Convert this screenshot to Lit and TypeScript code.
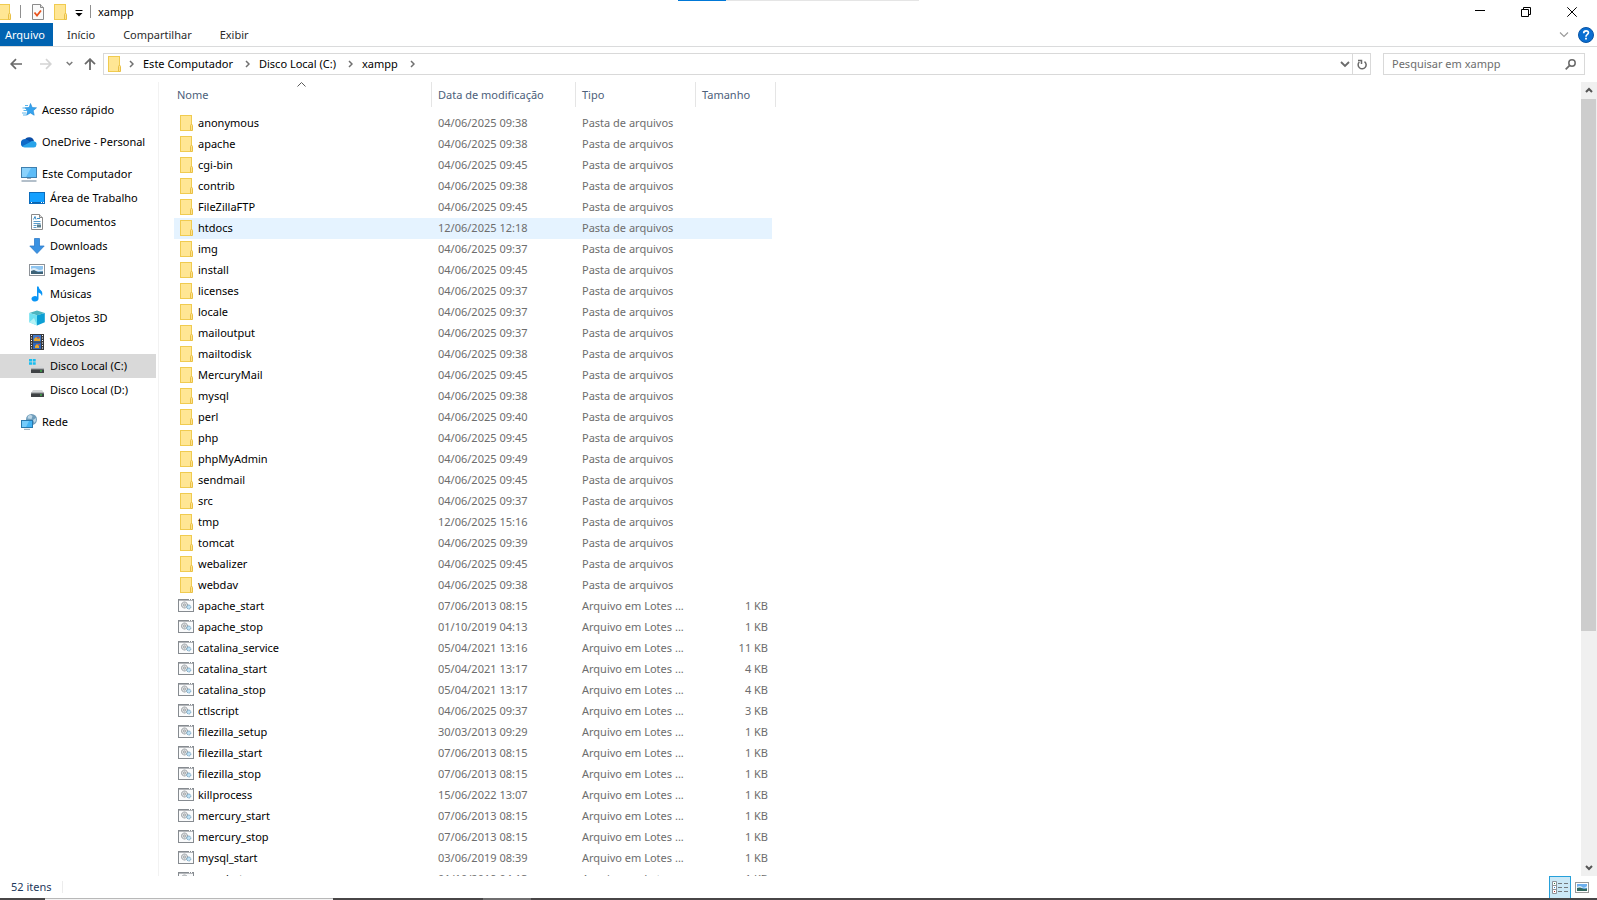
import { LitElement, html, css, svg, nothing, TemplateResult } from "lit";
import { customElement } from "lit/decorators.js";
import { classMap } from "lit/directives/class-map.js";

type Entry = { name: string; date: string; size?: string };

const folder = (name: string, date: string): Entry => ({ name, date });
const batch = (name: string, date: string, size = "1 KB"): Entry => ({ name, date, size });

const ENTRIES: Entry[] = [
  folder("anonymous", "04/06/2025 09:38"),
  folder("apache", "04/06/2025 09:38"),
  folder("cgi-bin", "04/06/2025 09:45"),
  folder("contrib", "04/06/2025 09:38"),
  folder("FileZillaFTP", "04/06/2025 09:45"),
  folder("htdocs", "12/06/2025 12:18"),
  folder("img", "04/06/2025 09:37"),
  folder("install", "04/06/2025 09:45"),
  folder("licenses", "04/06/2025 09:37"),
  folder("locale", "04/06/2025 09:37"),
  folder("mailoutput", "04/06/2025 09:37"),
  folder("mailtodisk", "04/06/2025 09:38"),
  folder("MercuryMail", "04/06/2025 09:45"),
  folder("mysql", "04/06/2025 09:38"),
  folder("perl", "04/06/2025 09:40"),
  folder("php", "04/06/2025 09:45"),
  folder("phpMyAdmin", "04/06/2025 09:49"),
  folder("sendmail", "04/06/2025 09:45"),
  folder("src", "04/06/2025 09:37"),
  folder("tmp", "12/06/2025 15:16"),
  folder("tomcat", "04/06/2025 09:39"),
  folder("webalizer", "04/06/2025 09:45"),
  folder("webdav", "04/06/2025 09:38"),
  batch("apache_start", "07/06/2013 08:15"),
  batch("apache_stop", "01/10/2019 04:13"),
  batch("catalina_service", "05/04/2021 13:16", "11 KB"),
  batch("catalina_start", "05/04/2021 13:17", "4 KB"),
  batch("catalina_stop", "05/04/2021 13:17", "4 KB"),
  batch("ctlscript", "04/06/2025 09:37", "3 KB"),
  batch("filezilla_setup", "30/03/2013 09:29"),
  batch("filezilla_start", "07/06/2013 08:15"),
  batch("filezilla_stop", "07/06/2013 08:15"),
  batch("killprocess", "15/06/2022 13:07"),
  batch("mercury_start", "07/06/2013 08:15"),
  batch("mercury_stop", "07/06/2013 08:15"),
  batch("mysql_start", "03/06/2019 08:39"),
  batch("mysql_stop", "01/10/2019 04:13"),
];

const icon = (body: TemplateResult | unknown, w = 16, h = 16) =>
  html`<svg class="icon" width=${w} height=${h} viewBox="0 0 ${w} ${h}" aria-hidden="true">${body}</svg>`;

const folderIcon = icon(svg`
  <rect x="2.5" y="0.5" width="11" height="15" fill="#ffe694" stroke="#f0cb50"/>
  <path d="M12.500 15.500v-5q0-1 1-1t1 1v5z" fill="#ffe28a" stroke="#e9c046"/>`);

const batchIcon = icon(svg`
  <rect x="0.5" y="1.500" width="15" height="12" fill="#fafbfc" stroke="#868b90"/>
  <path d="M0 1.800h16" stroke="#868b90" stroke-width="1.600"/>
  <path d="M11 1.500h1M13 1.500h1" stroke="#fff"/>
  <circle cx="6.500" cy="7" r="3" fill="#e0e3e5" stroke="#82878c" stroke-dasharray="1.500 .6"/>
  <circle cx="6.500" cy="7" r="1" fill="#fff" stroke="#85898d" stroke-width=".8"/>
  <circle cx="10.800" cy="9" r="2" fill="#bfe1f5" stroke="#6f9fbd" stroke-dasharray="1.300 .5"/>`);

const chevronRight = icon(svg`<path d="M1 1l3 3-3 3" fill="none" stroke="#707070" stroke-width="1.500"/>`, 5, 8);

const drive = svg`
  <path d="M4 8h9l2 3H2z" fill="#d4d6d8"/>
  <rect x="2" y="11" width="13" height="4" rx=".5" fill="#3f4245"/>
  <path d="M2 11h13" stroke="#8c8f92"/>
  <rect x="11" y="12.500" width="2" height="1" fill="#3ce04c"/>`;

const ICONS = {
  quick: icon(svg`
    <path d="M9.500 1.500l1.700 4 4.300.3-3.300 2.900 1 4.500-3.900-2.300-3.700 2.300 1-4.500L4 5.800l4.100-.3z" fill="#35a3ee" stroke="#1f86d3" stroke-width=".6"/>
    <path d="M4 3.500h3M1.500 6h4M2.500 8.500h3.500M1 11h4M2 13h3" stroke="#4aaeea" stroke-width=".9"/>`),
  onedrive: icon(svg`
    <path d="M3.500 6.500a5 5 0 0 1 9.500 0.500l-4 4z" fill="#0a4da6"/>
    <path d="M0 10a4 4 0 0 1 6.500-4L12 9.500 2 13A3 3 0 0 1 0 10z" fill="#0f6ac8"/>
    <path d="M8.500 8.500q2-2 4.500-1.300a3.200 3.200 0 0 1-.2 6.300H4q-1.800 0-2.800-1.200z" fill="#28a3ea"/>`),
  pc: icon(svg`
    <rect x="0.500" y="1.500" width="15" height="10" fill="#5dbcf7" stroke="#3f7fae"/>
    <path d="M1 2h9L5 11H1z" fill="#8ad2fc"/>
    <path d="M6 12.500h4" stroke="#9ab" />
    <path d="M0.500 15h15" stroke="#93a4b3" stroke-width="1.400"/>`),
  desktop: icon(svg`
    <rect x="0.500" y="2.500" width="15" height="11" fill="#14a0ff" stroke="#0b6cbc"/>
    <path d="M1 12.500h14" stroke="#0b63ad"/>
    <path d="M2 12.500h1M12 12.500h1M14 12.500h1" stroke="#fff"/>`),
  documents: icon(svg`
    <path d="M2.500.5h8l3 3v12h-11z" fill="#fff" stroke="#8a8a8a"/>
    <path d="M10.500.5v3h3" fill="#ddd" stroke="#8a8a8a"/>
    <path d="M4.500 5.500l1.500-3 1 3M8 4.500h3" fill="none" stroke="#3c8dc5"/>
    <path d="M4.500 7.500h7M4.500 9.500h7M4.500 11.500h3M4.500 13.500h3" stroke="#5a9cc9"/>
    <rect x="8" y="10.500" width="4" height="3" fill="#5a7f8f"/>`),
  downloads: icon(svg`
    <path d="M5.500.5h5v7.500h4.700L8 15.500.8 8h4.700z" fill="#3a92e2" stroke="#2e7ccc" stroke-width=".8"/>`),
  images: icon(svg`
    <rect x="0.500" y="2.500" width="15" height="11" fill="#fff" stroke="#8d9298"/>
    <rect x="2" y="4" width="12" height="8" fill="#8fc5f0"/>
    <path d="M2 7q3-2 6 0t6 0v2H2z" fill="#dcecf8"/>
    <path d="M2 9l3-1 4 2 5-.5V12H2z" fill="#3d6277"/>`),
  music: icon(svg`
    <path d="M8 .5h1.500q.5 2.500 2.500 4t1 5.500q-.8-2.700-3.500-3.500v6a3.500 2.800 0 1 1-1.500-2z" fill="#0a95f5"/>`),
  objects: icon(svg`
    <path d="M8 .5l7.800 2.600L8 5.300.2 3.100z" fill="#4db5bf"/>
    <path d="M.2 3.100L8 5.300v10.200L.2 12.300z" fill="#6fe0f0"/>
    <path d="M15.800 3.100L8 5.300v10.200l7.800-3.200z" fill="#0c9fd4"/>
    <path d="M.2 12.300L5 8l3 7.500z" fill="#b4f2f6"/>`),
  videos: icon(svg`
    <rect x="1" y="0" width="14" height="16" fill="#3a3a3c"/>
    <rect x="4" y="1" width="8" height="6.500" fill="#3f78c9"/>
    <rect x="4" y="8.500" width="8" height="6.500" fill="#2f66b9"/>
    <path d="M5 5l2-2 2 2 2-1v3H5zM6 12l2-2 2 2v2H6z" fill="#e7a72c"/>
    <path d="M8 3h2v1H8zM9 10h2v1H9z" fill="#d44a3a"/>
    <path d="M2.500 1v15M13.500 1v15" stroke="#fff" stroke-dasharray="1 1.500"/>`),
  system: icon(svg`
    <path d="M0 1h3v2.500H0zM3.700 1h3v2.500h-3zM0 4.300h3v2.500H0zM3.700 4.300h3v2.500h-3z" fill="#19bdf0"/>${drive}`),
  drive: icon(drive),
  network: icon(svg`
    <circle cx="10.500" cy="5.500" r="5.500" fill="#6f9dbb"/>
    <path d="M7 2q2.500-2 4.500 0l-1 3-4-.5zM12 6l3-2q.5 2.500-1.500 5z" fill="#bcd6e6"/>
    <rect x="0.500" y="6.500" width="11" height="7" fill="#43b4f5" stroke="#2878ad"/>
    <path d="M1 7h7l-3 6H1z" fill="#74cbfb"/>
    <path d="M3 15.300h6" stroke="#8fa3b3"/>`),
};

const PLACES: { label: string; icon: keyof typeof ICONS; nested?: boolean; current?: boolean; gap?: boolean }[] = [
  { label: "Acesso rápido", icon: "quick" },
  { label: "OneDrive - Personal", icon: "onedrive", gap: true },
  { label: "Este Computador", icon: "pc", gap: true },
  { label: "Área de Trabalho", icon: "desktop", nested: true },
  { label: "Documentos", icon: "documents", nested: true },
  { label: "Downloads", icon: "downloads", nested: true },
  { label: "Imagens", icon: "images", nested: true },
  { label: "Músicas", icon: "music", nested: true },
  { label: "Objetos 3D", icon: "objects", nested: true },
  { label: "Vídeos", icon: "videos", nested: true },
  { label: "Disco Local (C:)", icon: "system", nested: true, current: true },
  { label: "Disco Local (D:)", icon: "drive", nested: true },
  { label: "Rede", icon: "network", gap: true },
];

const base = css`
  :host { font: 11px/16px "Noto Sans", "Open Sans", sans-serif; color: #000; }
  * { box-sizing: border-box; }
  button { font: inherit; color: inherit; background: none; border: 0; padding: 0; margin: 0;
    display: flex; align-items: center; justify-content: center; white-space: nowrap; }
  a { color: inherit; text-decoration: none; }
  ul { list-style: none; margin: 0; padding: 0; }
  .icon { display: block; flex: none; }
`;

@customElement("window-chrome")
class WindowChrome extends LitElement {
  static styles = [base, css`
    :host { display: block; flex: none; }
    .title { position: relative; display: flex; height: 23px; align-items: center; }
    .quick { display: flex; align-items: center; gap: 8px; }
    .quick .first { width: 12px; overflow: hidden; justify-content: flex-end; }
    .quick .props { padding-left: 3px; }
    .rule { width: 1px; height: 13px; background: #8f8f8f; }
    h1 { font: inherit; margin: 0 auto 0 7px; }
    .controls { display: flex; padding-right: 2px; }
    .controls button { width: 46px; height: 21px; }
    .progress { position: absolute; top: 0; left: 50%; width: 241px; height: 1px; margin-left: -121px; background: #e5e5e5; }
    .value { width: 20%; height: 1px; background: #0078d7; }
    .tabs { display: flex; height: 24px; border-bottom: 1px solid #dadbdc; align-items: stretch; color: #2b2b2b; }
    .tabs .tab { padding: 0 14px; }
    .tabs .file { width: 53px; padding: 0 5px; justify-content: flex-start; background: #0063b1; color: #fff; }
    .help { display: flex; margin-left: auto; gap: 9px; padding-right: 3px; }
    .nav { display: flex; height: 35px; align-items: center; padding: 0 12px 1px 10px; }
    .history { display: flex; align-items: center; width: 93px; }
    .history button:nth-child(2) { margin-left: 18px; }
    .history button:nth-child(3) { margin-left: 14px; }
    .history button:nth-child(4) { margin-left: 11px; }
    .address { display: flex; flex: 1; height: 22px; border: 1px solid #d9d9d9; align-items: center; }
    .address ol { display: flex; list-style: none; margin: 0; padding: 0; flex: 1; align-items: center; }
    .address li { display: flex; align-items: center; }
    .address .root { margin: 0 7px 0 2px; }
    .address a { padding: 0 12px 0 9px; }
    .address .drop { width: 14px; }
    .address .refresh { width: 18px; height: 20px; border-left: 1px solid #d9d9d9; }
    .search { display: flex; width: 202px; height: 22px; margin-left: 12px; border: 1px solid #d9d9d9; align-items: center; padding: 0 8px; }
    .search input { flex: 1; min-width: 0; border: 0; padding: 0; font: inherit; background: none; outline: 0; }
    .search input::placeholder { color: #6d6d6d; opacity: 1; }
  `];

  render() {
    return html`
      <header class="title">
        <div class="progress"><div class="value"></div></div>
        <div class="quick">
          <button class="first" aria-label="Janela">${folderIcon}</button>
          <span class="rule"></span>
          <button class="props" aria-label="Propriedades">${icon(svg`
            <path d="M.5.5h8l3 3v12H.5z" fill="#fafafa" stroke="#8b8b8b"/><path d="M8.500.5v3h3" fill="#ddd" stroke="#8b8b8b"/>
            <path d="M2.500 8.500l2.500 3 4-5" fill="none" stroke="#e8541e" stroke-width="1.800"/>`, 12)}</button>
          <button aria-label="Nova pasta">${folderIcon}</button>
        </div>
        <button class="menu" aria-label="Personalizar barra">${icon(svg`
          <path d="M7.500 5.500h7" stroke="#000"/><path d="M7.500 8h7L11 11.500z"/>`, 22, 14)}</button>
        <span class="rule"></span>
        <h1>xampp</h1>
        <div class="controls">
          <button aria-label="Minimizar">${icon(svg`<path d="M0 4.500h10" stroke="#000"/>`, 10, 11)}</button>
          <button aria-label="Restaurar">${icon(svg`<path d="M.5 2.500h7v7h-7zM2.500 2.500v-2h7v7h-2" fill="none" stroke="#000"/>`, 10, 10)}</button>
          <button aria-label="Fechar">${icon(svg`<path d="M.3.3l9.400 9.400M9.700.3L.3 9.700" fill="none" stroke="#000"/>`, 10, 10)}</button>
        </div>
      </header>
      <nav class="tabs">
        <button class="file">Arquivo</button>
        <button class="tab">Início</button>
        <button class="tab">Compartilhar</button>
        <button class="tab">Exibir</button>
        <div class="help">
          <button aria-label="Expandir faixa">${icon(svg`<path d="M1 1.500l4 4 4-4" fill="none" stroke="#999" stroke-width="1.100"/>`, 10, 7)}</button>
          <button aria-label="Ajuda"><svg class="icon" width="16" height="16" viewBox="0 0 16 16" aria-hidden="true">
            <circle cx="8" cy="8" r="7.500" fill="#0a6ed1" stroke="#0a55a5"/>
            <path d="M5.700 6.200q0-2.400 2.400-2.400t2.300 2q0 1-1.200 1.800T8 9.700" fill="none" stroke="#fff" stroke-width="1.700"/>
            <path d="M7.100 10.800h1.800v1.700H7.100z" fill="#fff"/></svg></button>
        </div>
      </nav>
      <div class="nav">
        <div class="history">
          <button aria-label="Voltar">${icon(svg`<path d="M12 6H1.500M6 1.200L1.200 6 6 10.800" fill="none" stroke="#6a6a6a" stroke-width="1.700"/>`, 12, 12)}</button>
          <button aria-label="Avançar">${icon(svg`<path d="M0 6h10.500M6 1.200L10.800 6 6 10.800" fill="none" stroke="#d4d4d4" stroke-width="1.700"/>`, 12, 12)}</button>
          <button aria-label="Locais recentes">${icon(svg`<path d="M.7 1l2.800 2.800L6.300 1" fill="none" stroke="#7a7a7a" stroke-width="1.500"/>`, 7, 6)}</button>
          <button aria-label="Acima">${icon(svg`<path d="M6 12V1.500M1 6.200l5-5 5 5" fill="none" stroke="#6a6a6a" stroke-width="1.800"/>`, 12, 12)}</button>
        </div>
        <div class="address">
          <ol>
            <li><span class="root">${folderIcon}</span>${chevronRight}</li>
            ${["Este Computador", "Disco Local (C:)", "xampp"].map((part) => html`<li><a href="#">${part}</a>${chevronRight}</li>`)}
          </ol>
          <button class="drop" aria-label="Locais anteriores">${icon(svg`<path d="M1 1l4 4 4-4" fill="none" stroke="#6a6a6a" stroke-width="1.800"/>`, 10, 7)}</button>
          <button class="refresh" aria-label="Atualizar">${icon(svg`<path d="M7.500 2.600A4 4 0 1 1 2.300 3M1 1.500h3.500V5" fill="none" stroke="#6a6a6a" stroke-width="1.500"/>`, 10, 11)}</button>
        </div>
        <label class="search">
          <input type="text" aria-label="Pesquisar em xampp" placeholder="Pesquisar em xampp">
          ${icon(svg`<circle cx="7" cy="4" r="3.200" fill="none" stroke="#6a6a6a" stroke-width="1.500"/><path d="M4.700 6.300L.7 10.300" stroke="#6a6a6a" stroke-width="1.800"/>`, 11, 11)}
        </label>
      </div>`;
  }
}

@customElement("places-pane")
class PlacesPane extends LitElement {
  static styles = [base, css`
    :host { display: block; flex: none; width: 159px; padding: 16px 2px 0 0; border-right: 1px solid #f2f2f2; }
    a { display: flex; height: 24px; align-items: center; gap: 5px; padding-left: 21px; white-space: nowrap; }
    .nested { padding-left: 29px; }
    .gap { margin-top: 8px; }
    .current { background: #d9d9d9; }
  `];

  render() {
    return html`<ul>${PLACES.map((p) => html`
      <li class=${classMap({ gap: !!p.gap })}>
        <a href="#" class=${classMap({ nested: !!p.nested, current: !!p.current })}>${ICONS[p.icon]}<span>${p.label}</span></a>
      </li>`)}</ul>`;
  }
}

@customElement("file-list")
class FileList extends LitElement {
  static styles = [base, css`
    :host { display: flex; flex: 1; min-width: 0; overflow: hidden; }
    .view { flex: 1; min-width: 0; overflow: hidden; padding-left: 15px; }
    table { table-layout: fixed; width: 602px; border-collapse: separate; border-spacing: 0; }
    .name { width: 258px; }
    .date { width: 144px; }
    .type { width: 120px; }
    .size { width: 80px; }
    th { position: relative; height: 25px; padding: 0 0 0 6px; font-weight: 400; text-align: left; color: #4c607a; border-right: 1px solid #e5e5e5; }
    th:first-child { padding-left: 3px; }
    .sort { position: absolute; top: 0; left: 123px; }
    .spacer td { height: 6px; }
    td { height: 21px; padding: 0 0 0 6px; color: #6d6d6d; white-space: nowrap; line-height: 20px; vertical-align: top; }
    td:first-child { padding-left: 4px; color: #000; }
    td:last-child { padding-right: 4px; text-align: right; border-right: 4px solid transparent; background-clip: padding-box; }
    .file { display: flex; align-items: center; gap: 4px; }
    .hover td { background-color: #e5f3ff; }
    .scroll { display: flex; flex-direction: column; width: 16px; background: #f0f0f0; }
    .scroll button { height: 17px; }
    .track { flex: 1; }
    .thumb { height: 70%; background: #cdcdcd; margin-right: 1px; }
  `];

  render() {
    return html`
      <div class="view">
        <table>
          <thead>
            <tr>
              <th class="name">Nome<span class="sort">${icon(svg`<path d="M.5 4.500l4-4 4 4" fill="none" stroke="#5a5a5a"/>`, 9, 5)}</span></th>
              <th class="date">Data de modificação</th>
              <th class="type">Tipo</th>
              <th class="size">Tamanho</th>
            </tr>
          </thead>
          <tbody>
            <tr class="spacer" aria-hidden="true"><td colspan="4"></td></tr>
            ${ENTRIES.map((e) => html`
              <tr class=${classMap({ hover: e.name === "htdocs" })}>
                <td><span class="file">${e.size ? batchIcon : folderIcon}${e.name}</span></td>
                <td>${e.date}</td>
                <td>${e.size ? "Arquivo em Lotes ..." : "Pasta de arquivos"}</td>
                <td>${e.size ?? nothing}</td>
              </tr>`)}
          </tbody>
        </table>
      </div>
      <div class="scroll">
        <button aria-label="Rolar para cima">${icon(svg`<path d="M1 5l3-3 3 3" fill="none" stroke="#555" stroke-width="2"/>`, 8, 7)}</button>
        <div class="track"><div class="thumb"></div></div>
        <button aria-label="Rolar para baixo">${icon(svg`<path d="M1 2l3 3 3-3" fill="none" stroke="#555" stroke-width="2"/>`, 8, 7)}</button>
      </div>`;
  }
}

@customElement("app-root")
class AppRoot extends LitElement {
  static styles = [base, css`
    :host { display: flex; flex-direction: column; height: 100vh; background: #fff; overflow: hidden; }
    main { display: flex; flex: 1; min-height: 0; }
    .status { display: flex; flex: none; height: 22px; align-items: center; padding: 0 4px 0 11px; color: #1e395b; }
    .count { padding-right: 10px; border-right: 1px solid #ececec; line-height: 12px; }
    .views { display: flex; margin-left: auto; align-items: center; }
    .views button { width: 22px; height: 22px; }
    .views .active { border: 1px solid #26a0da; border-bottom: 0; background: #cbe8f6; }
    .taskbar { display: flex; flex: none; height: 2px; background: #484647; }
    .box { width: 288px; margin-left: 45px; background: #f3f3f3; border-top: 1px solid #b8b8b8; }
    .task { width: 48px; margin-left: 150px; background: #6f6e6f; }
  `];

  render() {
    return html`
      <window-chrome></window-chrome>
      <main>
        <places-pane></places-pane>
        <file-list></file-list>
      </main>
      <footer class="status">
        <span class="count">52 itens</span>
        <div class="views">
          <button class="active" aria-label="Detalhes">${icon(svg`
            <path d="M.5.5h4v12h-4zM.5 4.500h4M.5 8.500h4" fill="#fff" stroke="#8d9298"/>
            <path d="M2 2.500h1" stroke="#2d7f4a"/><path d="M2 6.500h1" stroke="#2a7fc5"/><path d="M2 10.500h1" stroke="#b03030"/>
            <path d="M6 2.500h4M12 2.500h4M6 6.500h4M12 6.500h4M6 10.500h4M12 10.500h4" stroke="#75797d"/>`, 16, 13)}</button>
          <button aria-label="Miniaturas">${icon(svg`
            <rect x=".5" y=".5" width="13" height="10" fill="#fff" stroke="#9a9a9a"/>
            <rect x="2" y="2" width="10" height="7" fill="#6eb0ee"/><path d="M2 5q3-2 5 0t5-1v2H2z" fill="#d6e8f6"/>
            <path d="M2 6l3-.5 4 1.500 3-.5V9H2z" fill="#33695f"/>`, 14, 11)}</button>
        </div>
      </footer>
      <div class="taskbar"><span class="box"></span><span class="task"></span></div>`;
  }
}
